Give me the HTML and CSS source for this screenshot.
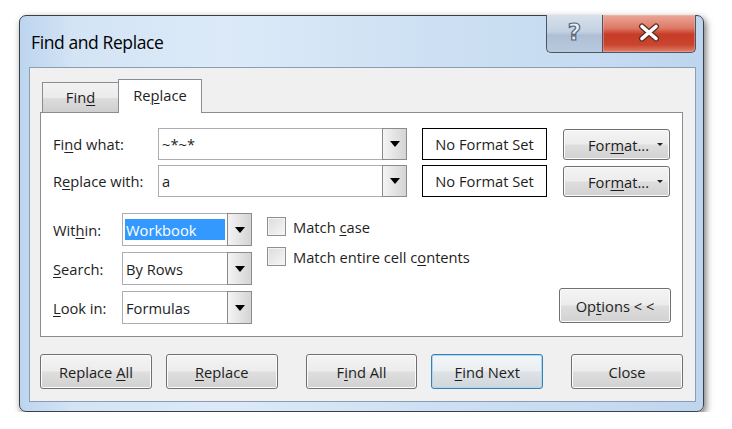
FILE: index.html
```
<!DOCTYPE html>
<html lang="en">
<head>
    <meta charset="UTF-8">
    <title>Find and Replace</title>
    <link rel="stylesheet" href="styles.css">
</head>
<body>
    <div class="window">
        <div class="titlebar">
            <div class="title">Find and Replace</div>
            <div class="caption-btns">
                <div class="cap-btn help">?</div>
                <div class="cap-btn close">
                    <svg width="22" height="19" viewBox="0 0 22 19">
                        <path d="M4 3.5 L18 15.5 M18 3.5 L4 15.5" stroke="#5b2a22" stroke-width="6" stroke-linecap="round" fill="none"/>
                        <path d="M4 3.5 L18 15.5 M18 3.5 L4 15.5" stroke="#fff" stroke-width="3.6" stroke-linecap="round" fill="none"/>
                    </svg>
                </div>
            </div>
        </div>

        <div class="client">
            <div class="tabs">
                <div class="tab"><span>Fin<u>d</u></span></div>
                <div class="tab active"><span>Re<u>p</u>lace</span></div>
            </div>

            <div class="panel">
                <div class="find-grid">
                    <div class="label"><span>Fi<u>n</u>d what:</span></div>
                    <div class="combo">
                        <div class="field">~*~*</div>
                        <div class="drop"><span class="arrow"></span></div>
                    </div>
                    <div class="format-box">No Format Set</div>
                    <div class="btn format-btn"><span>For<u>m</u>at...</span><span class="mini-arrow"></span></div>

                    <div class="label"><span>R<u>e</u>place with:</span></div>
                    <div class="combo">
                        <div class="field">a</div>
                        <div class="drop"><span class="arrow"></span></div>
                    </div>
                    <div class="format-box">No Format Set</div>
                    <div class="btn format-btn"><span>For<u>m</u>at...</span><span class="mini-arrow"></span></div>
                </div>

                <div class="options-area">
                    <div class="opt-grid">
                        <div class="label"><span>Wit<u>h</u>in:</span></div>
                        <div class="combo">
                            <div class="field sel-field"><span class="selected">Workbook</span></div>
                            <div class="drop"><span class="arrow"></span></div>
                        </div>
                        <div class="label"><span><u>S</u>earch:</span></div>
                        <div class="combo">
                            <div class="field">By Rows</div>
                            <div class="drop"><span class="arrow"></span></div>
                        </div>
                        <div class="label"><span><u>L</u>ook in:</span></div>
                        <div class="combo">
                            <div class="field">Formulas</div>
                            <div class="drop"><span class="arrow"></span></div>
                        </div>
                    </div>

                    <div class="checks">
                        <div class="check-row"><span class="checkbox"></span><span>Match <u>c</u>ase</span></div>
                        <div class="check-row"><span class="checkbox"></span><span>Match entire cell c<u>o</u>ntents</span></div>
                    </div>

                    <div class="btn options-btn"><span>Op<u>t</u>ions &lt; &lt;</span></div>
                </div>
            </div>

            <div class="actions">
                <div class="btn"><span>Replace <u>A</u>ll</span></div>
                <div class="btn"><span><u>R</u>eplace</span></div>
                <div class="btn wide-gap"><span>F<u>i</u>nd All</span></div>
                <div class="btn default"><span><u>F</u>ind Next</span></div>
                <div class="btn wide-gap"><span>Close</span></div>
            </div>
        </div>
    </div>
</body>
</html>
```
FILE: styles.css
```
body {
    margin: 0;
    padding: 15px 0 0 19px;
    background-color: #fff;
    font-family: "Open Sans", "Noto Sans", sans-serif;
    font-size: 14.7px;
    color: #1e1e1e;
}
u {
    text-decoration-thickness: 1px;
    text-underline-offset: 2px;
}
.window {
    width: 685px;
    height: 397px;
    box-sizing: border-box;
    border: 1px solid #3c4046;
    border-radius: 7px;
    background: linear-gradient(to right, #bcd5ee 0%, #d3e4f5 8%, #dceaf8 30%, #cde0f3 60%, #c6dbf1 85%, #bdd5ee 100%);
    box-shadow: 2px 3px 7px rgba(0, 0, 0, 0.55);
    display: flex;
    flex-direction: column;
}
.titlebar {
    height: 51px;
    display: flex;
    justify-content: space-between;
    align-items: flex-start;
}
.title {
    padding: 16px 0 0 11px;
    font-size: 17.5px;
    line-height: 20px;
    letter-spacing: -0.4px;
    color: #000;
}
.caption-btns {
    display: flex;
    margin: -1px 7px 0 0;
}
.cap-btn {
    height: 38px;
    box-sizing: border-box;
    border: 1px solid #4c5564;
    border-top: none;
    display: flex;
    align-items: center;
    justify-content: center;
}
.help {
    width: 56px;
    border-right: none;
    border-radius: 0 0 0 5px;
    background: linear-gradient(#d7e1ec 0%, #c3d1e1 45%, #aebfd5 55%, #b9cade 100%);
    font-family: "DejaVu Sans", sans-serif;
    font-weight: bold;
    font-size: 23px;
    color: #e9eef4;
    -webkit-text-stroke: 1.2px #56657a;
    padding-bottom: 4px;
}
.close {
    width: 94px;
    border-radius: 0 0 5px 0;
    background: linear-gradient(#eba698 0%, #de7a66 35%, #c73c27 52%, #c9442e 80%, #de806b 100%);
    box-shadow: inset 0 0 0 1px rgba(255, 200, 190, 0.35);
}
.close svg {
    margin-top: -3px;
}
.client {
    flex: 1;
    margin: 0 7px 9px 9px;
    border: 1px solid #8c9db3;
    background-color: #f0f0f0;
    padding: 11px 12px 0 10px;
    display: flex;
    flex-direction: column;
}
.tabs {
    height: 33px;
    margin-left: 2px;
    display: flex;
    align-items: flex-end;
}
.tab {
    width: 76px;
    height: 30px;
    box-sizing: border-box;
    border: 1px solid #898c95;
    border-bottom: none;
    border-right: none;
    background: linear-gradient(#f2f2f2 0%, #ebebeb 50%, #dddddd 51%, #cfcfcf 100%);
    display: flex;
    align-items: center;
    justify-content: center;
    padding-bottom: 2px;
}
.tab.active {
    width: 84px;
    height: 34px;
    margin-bottom: -1px;
    border-right: 1px solid #898c95;
    background: #fff;
    position: relative;
    z-index: 1;
    padding-bottom: 4px;
}
.panel {
    height: 225px;
    box-sizing: border-box;
    border: 1px solid #898c95;
    background-color: #fff;
    padding: 15px 12px 12px 12px;
}
.find-grid {
    display: grid;
    grid-template-columns: 90px 249px 125px 108px;
    grid-auto-rows: 32px;
    column-gap: 15px;
    row-gap: 5px;
}
.label {
    display: flex;
    align-items: center;
    white-space: nowrap;
    color: #1e1e1e;
}
.combo {
    display: flex;
}
.field {
    flex: 1;
    border: 1px solid #abadb3;
    border-right: none;
    background: #fff;
    display: flex;
    align-items: center;
    padding-left: 3px;
}
.sel-field {
    padding: 5px 2px;
}
.selected {
    flex: 1;
    align-self: stretch;
    background-color: #3399ff;
    color: #fff;
    padding-left: 1px;
    display: flex;
    align-items: center;
}
.drop {
    width: 25px;
    box-sizing: border-box;
    border: 1px solid #8b8b8b;
    background: linear-gradient(to right, #f4f4f4, #e4e4e4 50%, #d4d4d4);
    display: flex;
    align-items: center;
    justify-content: center;
}
.arrow {
    width: 0;
    height: 0;
    border-left: 5px solid transparent;
    border-right: 5px solid transparent;
    border-top: 6px solid #000;
    margin-left: 1px;
}
.format-box {
    border: 1px solid #000;
    background: #fff;
    display: flex;
    align-items: center;
    justify-content: center;
}
.btn {
    box-sizing: border-box;
    border: 1px solid #707070;
    border-radius: 3px;
    background: linear-gradient(#f4f4f4 0%, #ececec 48%, #dedede 52%, #d1d1d1 100%);
    box-shadow: inset 0 0 0 1px #fbfbfb;
    display: flex;
    align-items: center;
    justify-content: center;
    white-space: nowrap;
    color: #1e1e1e;
}
.format-btn {
    height: 31px;
    margin: 1px 0 0 1px;
    justify-content: flex-start;
    padding: 0 6px 0 24px;
}
.mini-arrow {
    margin-left: auto;
    width: 0;
    height: 0;
    border-left: 3px solid transparent;
    border-right: 3px solid transparent;
    border-top: 3px solid #222;
}
.options-area {
    margin-top: 16px;
    display: flex;
}
.opt-grid {
    display: grid;
    grid-template-columns: 69px 130px;
    grid-auto-rows: 33px;
    row-gap: 6px;
}
.checks {
    margin-left: 15px;
    padding-top: 4px;
    display: flex;
    flex-direction: column;
    gap: 11px;
}
.check-row {
    height: 19px;
    display: flex;
    align-items: center;
    white-space: nowrap;
}
.checkbox {
    width: 19px;
    height: 19px;
    box-sizing: border-box;
    border: 1px solid #8f8f8f;
    background: linear-gradient(135deg, #dcdcdc, #f6f6f6);
    box-shadow: inset 0 0 0 1px #f4f4f4;
    margin-right: 7px;
}
.options-btn {
    margin-left: auto;
    align-self: flex-end;
    width: 112px;
    height: 35px;
    margin-bottom: 1px;
    margin-right: -1px;
}
.actions {
    margin-top: 17px;
    display: flex;
    gap: 14px;
}
.actions .btn {
    width: 112px;
    height: 35px;
}
.actions .wide-gap {
    margin-left: 14px;
}
.actions .btn.default {
    border-color: #3c7fb1;
    box-shadow: inset 0 0 0 1px #a8d8f3;
    background: linear-gradient(#f3f6f8 0%, #eaeef1 48%, #dde2e6 52%, #d0d6da 100%);
}
```
